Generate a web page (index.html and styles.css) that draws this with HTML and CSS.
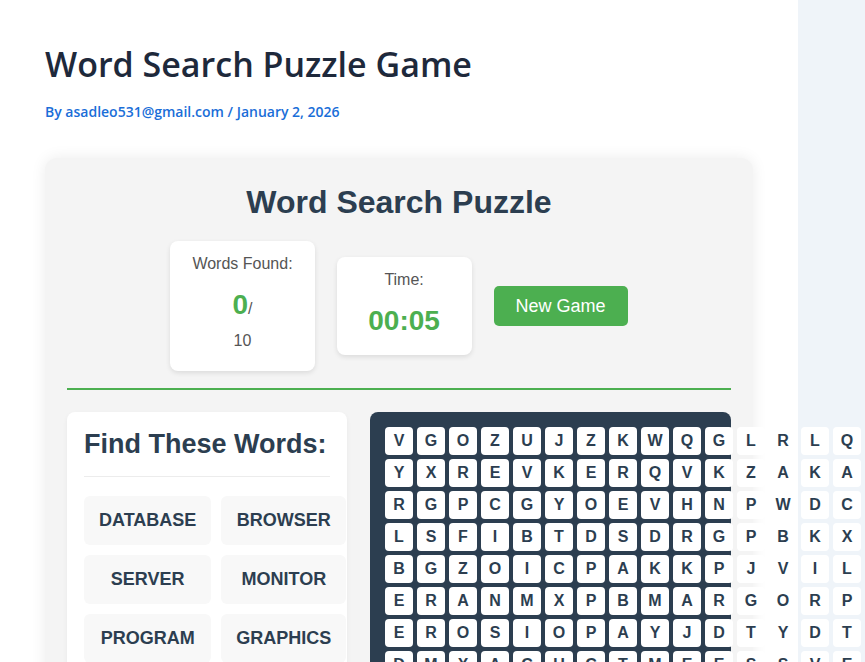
FILE: index.html
```html
<!DOCTYPE html>
<html lang="en">
<head>
<meta charset="utf-8">
<title>Word Search Puzzle Game</title>
<link rel="stylesheet" href="styles.css">
</head>
<body>
<main class="page">
  <h1 class="post-title">Word Search Puzzle Game</h1>
  <p class="post-meta">By asadleo531@gmail.com / January 2, 2026</p>

  <section class="game">
    <h2 class="game-title">Word Search Puzzle</h2>
    <div class="stats">
      <div class="stat">
        <div class="stat-label">Words Found:</div>
        <div class="stat-value">0<span class="stat-total">/<br>10</span></div>
      </div>
      <div class="stat">
        <div class="stat-label">Time:</div>
        <div class="stat-value">00:05</div>
      </div>
      <button class="btn" type="button">New Game</button>
    </div>
    <div class="divider"></div>

    <div class="play">
      <aside class="words">
        <h3 class="words-title">Find These Words:</h3>
        <div class="word-list">
          <div class="word">DATABASE</div>
          <div class="word">BROWSER</div>
          <div class="word">SERVER</div>
          <div class="word">MONITOR</div>
          <div class="word">PROGRAM</div>
          <div class="word">GRAPHICS</div>
          <div class="word">NETWORK</div>
          <div class="word">MEMORY</div>
          <div class="word">LAPTOP</div>
          <div class="word">SCRIPT</div>
        </div>
      </aside>

      <div class="board">
        <div class="grid">
          <div class="cell">V</div><div class="cell">G</div><div class="cell">O</div><div class="cell">Z</div><div class="cell">U</div><div class="cell">J</div><div class="cell">Z</div><div class="cell">K</div><div class="cell">W</div><div class="cell">Q</div><div class="cell">G</div><div class="cell">L</div><div class="cell">R</div><div class="cell">L</div><div class="cell">Q</div>
          <div class="cell">Y</div><div class="cell">X</div><div class="cell">R</div><div class="cell">E</div><div class="cell">V</div><div class="cell">K</div><div class="cell">E</div><div class="cell">R</div><div class="cell">Q</div><div class="cell">V</div><div class="cell">K</div><div class="cell">Z</div><div class="cell">A</div><div class="cell">K</div><div class="cell">A</div>
          <div class="cell">R</div><div class="cell">G</div><div class="cell">P</div><div class="cell">C</div><div class="cell">G</div><div class="cell">Y</div><div class="cell">O</div><div class="cell">E</div><div class="cell">V</div><div class="cell">H</div><div class="cell">N</div><div class="cell">P</div><div class="cell">W</div><div class="cell">D</div><div class="cell">C</div>
          <div class="cell">L</div><div class="cell">S</div><div class="cell">F</div><div class="cell">I</div><div class="cell">B</div><div class="cell">T</div><div class="cell">D</div><div class="cell">S</div><div class="cell">D</div><div class="cell">R</div><div class="cell">G</div><div class="cell">P</div><div class="cell">B</div><div class="cell">K</div><div class="cell">X</div>
          <div class="cell">B</div><div class="cell">G</div><div class="cell">Z</div><div class="cell">O</div><div class="cell">I</div><div class="cell">C</div><div class="cell">P</div><div class="cell">A</div><div class="cell">K</div><div class="cell">K</div><div class="cell">P</div><div class="cell">J</div><div class="cell">V</div><div class="cell">I</div><div class="cell">L</div>
          <div class="cell">E</div><div class="cell">R</div><div class="cell">A</div><div class="cell">N</div><div class="cell">M</div><div class="cell">X</div><div class="cell">P</div><div class="cell">B</div><div class="cell">M</div><div class="cell">A</div><div class="cell">R</div><div class="cell">G</div><div class="cell">O</div><div class="cell">R</div><div class="cell">P</div>
          <div class="cell">E</div><div class="cell">R</div><div class="cell">O</div><div class="cell">S</div><div class="cell">I</div><div class="cell">O</div><div class="cell">P</div><div class="cell">A</div><div class="cell">Y</div><div class="cell">J</div><div class="cell">D</div><div class="cell">T</div><div class="cell">Y</div><div class="cell">D</div><div class="cell">T</div>
          <div class="cell">D</div><div class="cell">M</div><div class="cell">X</div><div class="cell">A</div><div class="cell">C</div><div class="cell">U</div><div class="cell">C</div><div class="cell">T</div><div class="cell">M</div><div class="cell">E</div><div class="cell">E</div><div class="cell">S</div><div class="cell">S</div><div class="cell">V</div><div class="cell">E</div>
          <div class="cell">N</div><div class="cell">E</div><div class="cell">T</div><div class="cell">W</div><div class="cell">O</div><div class="cell">R</div><div class="cell">K</div><div class="cell">H</div><div class="cell">S</div><div class="cell">A</div><div class="cell">L</div><div class="cell">Q</div><div class="cell">B</div><div class="cell">U</div><div class="cell">F</div>
          <div class="cell">C</div><div class="cell">O</div><div class="cell">D</div><div class="cell">I</div><div class="cell">N</div><div class="cell">G</div><div class="cell">M</div><div class="cell">Z</div><div class="cell">Y</div><div class="cell">R</div><div class="cell">T</div><div class="cell">E</div><div class="cell">P</div><div class="cell">L</div><div class="cell">K</div>
          <div class="cell">H</div><div class="cell">J</div><div class="cell">X</div><div class="cell">M</div><div class="cell">E</div><div class="cell">M</div><div class="cell">O</div><div class="cell">R</div><div class="cell">Y</div><div class="cell">W</div><div class="cell">Q</div><div class="cell">A</div><div class="cell">D</div><div class="cell">S</div><div class="cell">I</div>
          <div class="cell">U</div><div class="cell">S</div><div class="cell">C</div><div class="cell">R</div><div class="cell">I</div><div class="cell">P</div><div class="cell">T</div><div class="cell">F</div><div class="cell">G</div><div class="cell">L</div><div class="cell">A</div><div class="cell">P</div><div class="cell">T</div><div class="cell">O</div><div class="cell">P</div>
          <div class="cell">W</div><div class="cell">K</div><div class="cell">B</div><div class="cell">N</div><div class="cell">V</div><div class="cell">Z</div><div class="cell">H</div><div class="cell">Q</div><div class="cell">E</div><div class="cell">D</div><div class="cell">I</div><div class="cell">R</div><div class="cell">C</div><div class="cell">J</div><div class="cell">M</div>
          <div class="cell">T</div><div class="cell">F</div><div class="cell">A</div><div class="cell">Y</div><div class="cell">O</div><div class="cell">L</div><div class="cell">X</div><div class="cell">S</div><div class="cell">U</div><div class="cell">G</div><div class="cell">N</div><div class="cell">B</div><div class="cell">W</div><div class="cell">E</div><div class="cell">R</div>
          <div class="cell">Q</div><div class="cell">P</div><div class="cell">L</div><div class="cell">M</div><div class="cell">D</div><div class="cell">K</div><div class="cell">V</div><div class="cell">C</div><div class="cell">H</div><div class="cell">T</div><div class="cell">Y</div><div class="cell">F</div><div class="cell">Z</div><div class="cell">O</div><div class="cell">A</div>
        </div>
      </div>
    </div>
  </section>
</main>
</body>
</html>
```

FILE: styles.css
```css
body {
  margin: 0;
  background: #eff4f9;
  font-family: "Open Sans", "Noto Sans", sans-serif;
}

.page {
  width: 798px;
  min-height: 100vh;
  box-sizing: border-box;
  background: #ffffff;
  padding: 41px 0 40px 45px;
}

.post-title {
  margin: 0;
  font-size: 34px;
  font-weight: 600;
  color: #1e293b;
}

.post-meta {
  margin: 15px 0 0;
  font-size: 14px;
  font-weight: 600;
  color: #1a6ed8;
}

.game {
  margin-top: 37px;
  width: 708px;
  box-sizing: border-box;
  background: #f4f4f4;
  border-radius: 12px;
  box-shadow: 0 0 15px rgba(0, 0, 0, 0.08);
  padding: 26px 22px 30px;
  font-family: "Liberation Sans", Arial, sans-serif;
}

.game-title {
  margin: 0 0 20px;
  text-align: center;
  font-size: 32px;
  font-weight: bold;
  color: #2c3e50;
}

.stats {
  display: flex;
  justify-content: center;
  align-items: center;
  gap: 22px;
}

.stat {
  background: #ffffff;
  border-radius: 8px;
  box-shadow: 0 2px 5px rgba(0, 0, 0, 0.1);
  padding: 14px 22px 18px;
  min-width: 135px;
  box-sizing: border-box;
  text-align: center;
}

.stat-label {
  font-size: 16px;
  color: #555555;
  margin-bottom: 16px;
}

.stat-value {
  font-size: 28px;
  font-weight: bold;
  color: #4caf50;
}

.stat-total {
  font-size: 16px;
  font-weight: normal;
  color: #555555;
}

.btn {
  background: #4caf50;
  color: #ffffff;
  border: 0;
  border-radius: 5px;
  padding: 10px 22px;
  font-family: "Liberation Sans", Arial, sans-serif;
  font-size: 18px;
  line-height: 20px;
}

.divider {
  height: 2px;
  background: #4caf50;
  margin: 17px 0 22px;
}

.play {
  display: flex;
  align-items: flex-start;
  gap: 23px;
}

.words {
  flex: none;
  width: 280px;
  box-sizing: border-box;
  background: #ffffff;
  border-radius: 8px;
  box-shadow: 0 2px 5px rgba(0, 0, 0, 0.05);
  padding: 17px;
}

.words-title {
  margin: 0 0 19px;
  padding-bottom: 16px;
  border-bottom: 1px solid #ececec;
  font-size: 27px;
  color: #2c3e50;
}

.word-list {
  display: grid;
  grid-template-columns: repeat(2, 1fr);
  gap: 10px;
}

.word {
  background: #f8f8f8;
  border-radius: 6px;
  padding: 14px 15px;
  text-align: center;
  font-size: 18px;
  font-weight: bold;
  color: #2c3e50;
}

.board {
  flex: 1;
  min-width: 0;
  background: #2c3e50;
  border-radius: 8px;
  padding: 15px;
}

.grid {
  display: grid;
  grid-template-columns: repeat(15, 28px);
  grid-auto-rows: 28px;
  gap: 4px;
}

.cell {
  display: flex;
  align-items: center;
  justify-content: center;
  background: #ffffff;
  border-radius: 4px;
  font-size: 16px;
  font-weight: bold;
  color: #2c3e50;
}
```
